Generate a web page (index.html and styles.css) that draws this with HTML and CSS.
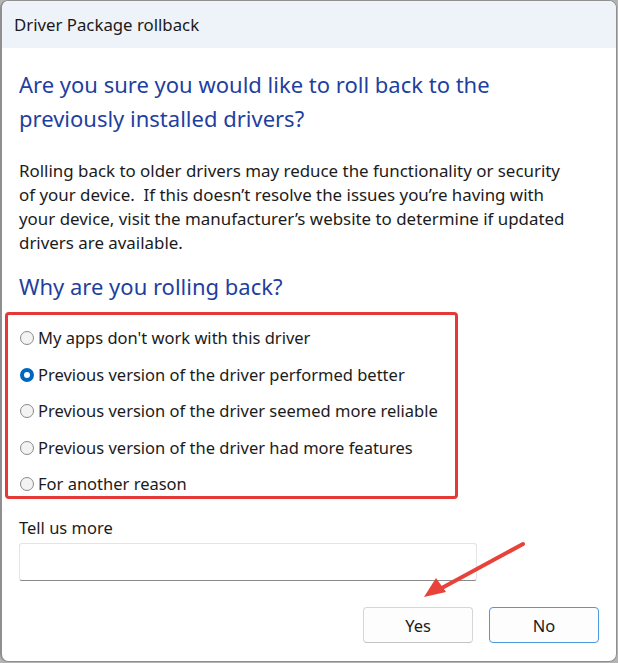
FILE: index.html
```html
<!DOCTYPE html>
<html>
<head>
<meta charset="utf-8">
<link rel="stylesheet" href="styles.css">
</head>
<body>
<div class="window">
  <div class="titlebar">Driver Package rollback</div>
  <div class="content">
    <h1 class="instruction">Are you sure you would like to roll back to the previously installed drivers?</h1>
    <p class="desc">Rolling back to older drivers may reduce the functionality or security of your device.&nbsp; If this doesn’t resolve the issues you’re having with your device, visit the manufacturer’s website to determine if updated drivers are available.</p>
    <h2 class="instruction why">Why are you rolling back?</h2>
    <div class="reasons">
      <div class="reason"><span class="radio"></span><span>My apps don't work with this driver</span></div>
      <div class="reason"><span class="radio checked"></span><span>Previous version of the driver performed better</span></div>
      <div class="reason"><span class="radio"></span><span>Previous version of the driver seemed more reliable</span></div>
      <div class="reason"><span class="radio"></span><span>Previous version of the driver had more features</span></div>
      <div class="reason"><span class="radio"></span><span>For another reason</span></div>
    </div>
    <div class="more-label">Tell us more</div>
    <div class="textbox"></div>
    <div class="buttons">
      <button class="btn">Yes</button>
      <button class="btn default">No</button>
    </div>
  </div>
  <svg class="arrow" width="618" height="663" viewBox="0 0 618 663">
    <line x1="523" y1="544" x2="440" y2="589" stroke="#e8433a" stroke-width="4" stroke-linecap="round"/>
    <polygon points="424,597 436,578 446,592" fill="#e8433a"/>
  </svg>
</div>
</body>
</html>
```

FILE: styles.css
```css
html, body {
  margin: 0;
  padding: 0;
}
body {
  background: #b4b4b4;
  width: 618px;
  height: 663px;
  overflow: hidden;
  font-family: "Noto Sans", "Open Sans", sans-serif;
  color: #1b1b1b;
}
.window {
  position: relative;
  box-sizing: border-box;
  width: 617px;
  height: 662px;
  background: #ffffff;
  border: 1px solid #8f8f8f;
  border-left-width: 2px;
  border-radius: 8px;
  overflow: hidden;
}
.titlebar {
  height: 47px;
  background: #eef2f9;
  font-size: 16.8px;
  line-height: 47px;
  padding-left: 12px;
  color: #1a1a1a;
}
.content {
  padding: 0 16px 0 17px;
  display: flex;
  flex-direction: column;
}
.instruction {
  margin: 0;
  font-weight: normal;
  font-size: 22px;
  line-height: 34px;
  color: #1f3fa0;
}
h1.instruction {
  margin-top: 19px;
  width: 500px;
}
.desc {
  margin: 24px 0 0 0;
  width: 555px;
  font-size: 16.9px;
  line-height: 24px;
  color: #1b1b1b;
}
.why {
  margin-top: 14px;
}
.reasons {
  margin: 9px 0 0 -14px;
  width: 453px;
  box-sizing: border-box;
  border: 3px solid #e53935;
  border-radius: 4px;
  padding: 11px 0 0 12px;
  display: flex;
  flex-direction: column;
  gap: 12.5px;
}
.reason {
  height: 24px;
  display: flex;
  align-items: center;
  gap: 4px;
  font-size: 16.5px;
  line-height: 24px;
}
.radio {
  width: 14px;
  height: 14px;
  box-sizing: border-box;
  border-radius: 50%;
  border: 1px solid #8a8a8a;
  background: #f3f3f3;
  flex: none;
}
.radio.checked {
  border: 4px solid #0067c0;
  background: #ffffff;
}
.more-label {
  margin-top: 17px;
  font-size: 16.5px;
  line-height: 24px;
}
.textbox {
  margin-top: 3px;
  width: 458px;
  height: 38px;
  box-sizing: border-box;
  border: 1px solid #e4e4e4;
  border-bottom: 1px solid #8a8a8a;
  border-radius: 3px;
}
.buttons {
  margin-top: 26px;
  display: flex;
  justify-content: flex-end;
  gap: 16px;
  padding-right: 1px;
}
.btn {
  width: 110px;
  height: 36px;
  box-sizing: border-box;
  background: #fdfdfd;
  border: 1px solid #d6d6d6;
  border-bottom-color: #c4c4c4;
  border-radius: 4px;
  font-family: "Noto Sans", "Open Sans", sans-serif;
  font-size: 16.5px;
  color: #1b1b1b;
}
.btn.default {
  border: 1px solid #4a9ae0;
}
.arrow {
  position: absolute;
  left: -2px;
  top: -1px;
  pointer-events: none;
}
```
